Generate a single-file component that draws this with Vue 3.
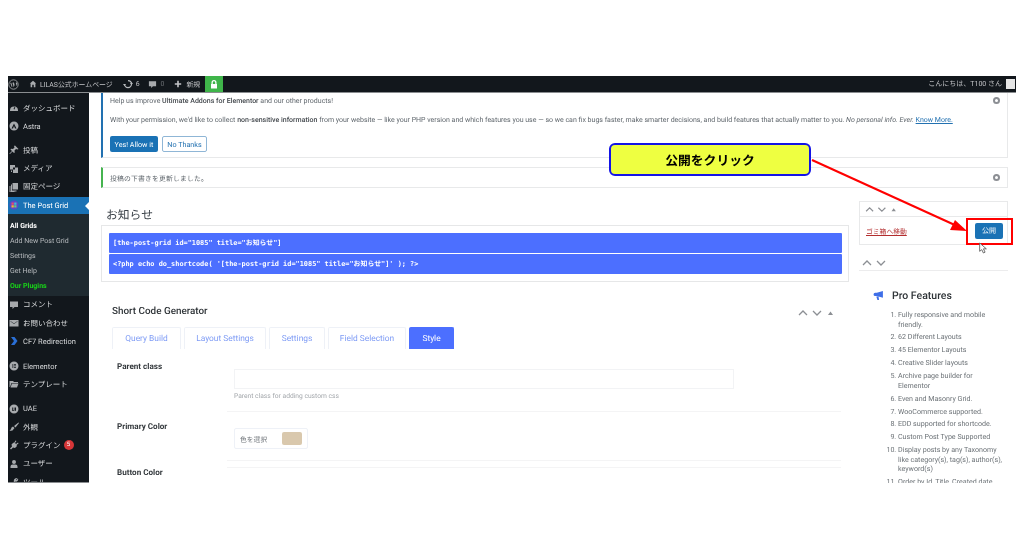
<script setup>
const topItems = [
  { label: 'ダッシュボード', icon: 'dash', cls: 'first' },
  { label: 'Astra', icon: 'astra' },
  { label: '投稿', icon: 'pin', cls: 'gap' },
  { label: 'メディア', icon: 'media' },
  { label: '固定ページ', icon: 'page' },
]
const subItems = ['Add New Post Grid', 'Settings', 'Get Help']
const lowItems = [
  { label: 'コメント', icon: 'comment' },
  { label: 'お問い合わせ', icon: 'mail' },
  { label: 'CF7 Redirection', icon: 'cf7' },
  { label: 'Elementor', icon: 'el', cls: 'gap2' },
  { label: 'テンプレート', icon: 'folder' },
  { label: 'UAE', icon: 'uae', cls: 'gap2' },
  { label: '外観', icon: 'brush' },
  { label: 'プラグイン', icon: 'plug', badge: '5' },
  { label: 'ユーザー', icon: 'user' },
  { label: 'ツール', icon: 'tool' },
]
const paths = {
  dash: 'M2 15a8 8 0 1 1 16 0v1H2zM9 12l3-6 1 1-2 6z',
  astra: 'M10 1a9 9 0 1 0 0 18a9 9 0 0 0 0-18zM10 5l5 10h-3l-2-5-2 5H5z',
  pin: 'M12 1l7 7-2 1-3-1-3 3 .5 4-1.5 1-3-3-5 5-1 0 0-1 5-5-3-3 1-1.5 4 .5 3-3-1-3z',
  media: 'M2 2h10v9H2zM8 7h10v11H8zM4 13h2v3h-2z',
  page: 'M7 2h11v13H7zM4 5h2v12h9v2H4zM1 8h2v11h8v1H1z',
  comment: 'M2 3h16v11h-7l-4 4v-4H2z',
  mail: 'M1 4h18v13H1zM3 6l7 5 7-5v1l-7 5-7-5z',
  cf7: 'M4 2l7 0 6 8-6 8-7 0 6-8z',
  el: 'M10 1a9 9 0 1 0 0 18a9 9 0 0 0 0-18zM7 6h1.500v8H7zM10 6h4v1.500h-4zM10 9.200h4v1.500h-4zM10 12.500h4V14h-4z',
  folder: 'M1 4h7l2 2h8v2H5l-3 8H1zM6 9h13l-3 8H3z',
  uae: 'M10 1a9 9 0 1 0 0 18a9 9 0 0 0 0-18zM6 7h1.500v5h2V7H11v6.500H6zM12 7h2v6.500h-2z',
  brush: 'M19 1l-9 7 3 3 7-9zM8 9l3 3-4 5-6 1 3-4 1-3z',
  plug: 'M13 1l2 1-3 4 2 2 4-3 1 2-4 3 1 2-4 4-4-1-4 4-2-2 4-4-1-4 4-4 1 1z',
  user: 'M10 2a4 4 0 1 1 0 8a4 4 0 0 1 0-8zM3 18v-3q0-4 4-4h6q4 0 4 4v3z',
  tool: 'M17 2l-3 3 1 1 3-3q1 3-1 5t-5 1l-7 8q-2 1-3-1l8-7q-1-3 1-5t5-2z',
}
const features = [
  'Fully responsive and mobile\nfriendly.',
  '62 Different Layouts',
  '45 Elementor Layouts',
  'Creative Slider layouts',
  'Archive page builder for\nElementor',
  'Even and Masonry Grid.',
  'WooCommerce supported.',
  'EDD supported for shortcode.',
  'Custom Post Type Supported',
  'Display posts by any Taxonomy\nlike category(s), tag(s), author(s),\nkeyword(s)',
  'Order by Id, Title, Created date',
]
const tabs = [
  { label: 'Query Build', w: 69 },
  { label: 'Layout Settings', w: 82 },
  { label: 'Settings', w: 56 },
  { label: 'Field Selection', w: 78 },
  { label: 'Style', w: 45, active: true },
]
</script>

<template>
  <div class="frame">
    <header class="adminbar">
      <svg class="wp" viewBox="0 0 20 20"><circle cx="10" cy="10" r="8.500" fill="none" stroke="#a7aaad" stroke-width="1.500"/><path d="M4 6h5v1H8l2.500 8 1.500-4-1-4h-1V6h5v1h-1l2 6 1-3q.5-2-1-3V6" fill="#a7aaad"/><path d="M4 7l3 8 1-2-2-6z" fill="#a7aaad"/></svg>
      <svg class="ab-ic home" viewBox="0 0 20 20"><path d="M10 2l8 7h-2v9h-4v-6H8v6H4V9H2z" fill="#a7aaad"/></svg>
      <span class="ab-text site">LILAS公式ホームページ</span>
      <svg class="ab-ic upd" viewBox="0 0 20 20"><path d="M10 3a7 7 0 1 1-7 7" fill="none" stroke="#b9bcbf" stroke-width="2.500"/><path d="M0 10h6l-3 4zM14 10h6l-3-4z" fill="#b9bcbf"/></svg>
      <span class="ab-text num">6</span>
      <svg class="ab-ic cm" viewBox="0 0 20 20"><path d="M2 3h16v11h-7l-4 4v-4H2z" fill="#a7aaad"/></svg>
      <span class="ab-text num0 dim">0</span>
      <svg class="ab-ic plus" viewBox="0 0 20 20"><path d="M8 2h4v6h6v4h-6v6H8v-6H2V8h6z" fill="#c3c4c7"/></svg>
      <span class="ab-text new">新規</span>
      <span class="lock">
        <svg viewBox="0 0 20 20"><path d="M5 9V6a5 5 0 0 1 10 0v3h1v9H4V9zM7.500 9h5V6a2.500 2.500 0 0 0-5 0z" fill="#fff"/></svg>
      </span>
      <span class="greeting">こんにちは、T100 さん</span>
      <span class="avatar"></span>
    </header>

    <div class="body">
      <aside class="side">
        <div v-for="it in topItems" :key="it.label" class="item" :class="it.cls">
          <svg class="mi" viewBox="0 0 20 20"><path :d="paths[it.icon]" fill="#a7aaad" fill-rule="evenodd"/></svg>
          <span>{{ it.label }}</span>
        </div>
        <div class="item current">
          <svg class="mi" viewBox="0 0 20 20">
            <circle cx="10" cy="10" r="9" fill="#5a48c8"/>
            <rect x="5" y="5" width="4.500" height="4.500" fill="#e84a6f"/>
            <rect x="10.500" y="5" width="4.500" height="4.500" fill="#3ec1d3"/>
            <rect x="5" y="10.500" width="4.500" height="4.500" fill="#f5b82e"/>
            <rect x="10.500" y="10.500" width="4.500" height="4.500" fill="#5fcf80"/>
          </svg>
          <span>The Post Grid</span>
          <i class="notch"></i>
        </div>
        <div class="sub">
          <div class="sub-item strong">All Grids</div>
          <div v-for="s in subItems" :key="s" class="sub-item">{{ s }}</div>
          <div class="sub-item plugins">Our Plugins</div>
        </div>
        <div v-for="it in lowItems" :key="it.label" class="item" :class="it.cls">
          <svg class="mi" viewBox="0 0 20 20"><path :d="paths[it.icon]" :fill="it.icon === 'cf7' ? '#2a6fd6' : '#a7aaad'" fill-rule="evenodd"/></svg>
          <span>{{ it.label }}</span>
          <b v-if="it.badge" class="badge">{{ it.badge }}</b>
        </div>
      </aside>

      <main class="main">
        <section class="notice blue">
          <p class="n1">Help us improve <b>Ultimate Addons for Elementor</b> and our other products!</p>
          <p class="n2">With your permission, we'd like to collect <b>non-sensitive information</b> from your website — like your PHP version and which features you use — so we can fix bugs faster, make smarter decisions, and build features that actually matter to you. <em>No personal info. Ever.</em> <a>Know More.</a></p>
          <div class="n-btns">
            <span class="btn solid">Yes! Allow it</span>
            <span class="btn ghost">No Thanks</span>
          </div>
          <span class="close top"></span>
        </section>
        <section class="notice green">
          <span>投稿の下書きを更新しました。</span>
          <span class="close mid"></span>
        </section>

        <div class="cols">
          <div class="left">
            <h1>お知らせ</h1>
            <div class="codes">
              <code>[the-post-grid id="1085" title="お知らせ"]</code>
              <code>&lt;?php echo do_shortcode( '[the-post-grid id="1085" title="お知らせ"]' ); ?&gt;</code>
            </div>
            <div class="gen">
              <div class="gen-head">
                <h2>Short Code Generator</h2>
                <span class="chev">
                  <svg viewBox="0 0 36 8"><path d="M1 6l4-4 4 4M15 2l4 4 4-4" fill="none" stroke="#8c8f94" stroke-width="1.300"/><path d="M30 6l2.500-3.500L35 6z" fill="#8c8f94"/></svg>
                </span>
              </div>
              <div class="tabs">
                <span v-for="t in tabs" :key="t.label" class="tab" :class="{ active: t.active }" :style="{ width: t.w + 'px' }">{{ t.label }}</span>
              </div>
              <div class="field f1">
                <label>Parent class</label>
                <div class="ctl">
                  <div class="input"></div>
                  <div class="help">Parent class for adding custom css</div>
                </div>
              </div>
              <div class="field f2">
                <label>Primary Color</label>
                <div class="ctl">
                  <div class="color"><span>色を選択</span><i></i></div>
                </div>
              </div>
              <div class="field f3">
                <label>Button Color</label>
                <div class="ctl"></div>
              </div>
            </div>
          </div>

          <div class="right">
            <div class="pub">
              <div class="pub-head">
                <svg viewBox="0 0 36 8"><path d="M1 6l4-4 4 4M15 2l4 4 4-4" fill="none" stroke="#8c8f94" stroke-width="1.300"/><path d="M30 6l2.500-3.500L35 6z" fill="#8c8f94"/></svg>
              </div>
              <div class="pub-row">
                <a class="trash">ゴミ箱へ移動</a>
                <span class="publish">公開</span>
              </div>
            </div>
            <div class="box-head">
              <svg viewBox="0 0 24 8"><path d="M1 6l4-4 4 4M15 2l4 4 4-4" fill="none" stroke="#8c8f94" stroke-width="1.300"/></svg>
            </div>
            <div class="pro">
              <div class="pro-title">
                <svg viewBox="0 0 20 20"><path d="M18 2v12L7 11H4a3 3 0 0 1 0-6h3zM6 12h4l1 6H8z" fill="#3f6fe8"/></svg>
                <span>Pro Features</span>
              </div>
              <ol>
                <li v-for="f in features" :key="f">{{ f }}</li>
              </ol>
            </div>
          </div>
        </div>
      </main>
    </div>

    <div class="callout">公開をクリック</div>
    <svg class="arrow" viewBox="0 0 170 90">
      <path d="M1 1L146 67" stroke="#f00" stroke-width="2" fill="none"/>
      <path d="M156 72l-17-1 5-10z" fill="#f00"/>
    </svg>
    <div class="redbox"></div>
    <svg class="cursor" viewBox="0 0 12 14"><path d="M2 1v10l2.500-2 2 4 2-1-2-4H10z" fill="#fff" stroke="#555" stroke-width="1"/></svg>
  </div>
</template>

<style>
html, body { margin: 0; background: #fff; }
</style>

<style scoped>
.frame {
  position: relative;
  margin: 76px 8px 0;
  height: 407px;
  width: 1008px;
  overflow: visible;
  font-family: Roboto, "Noto Sans CJK JP", sans-serif;
  text-rendering: geometricPrecision;
  color: #50575e;
  filter: blur(0.35px);
}
.adminbar {
  height: 17px;
  background: #12171c;
  display: flex;
  align-items: center;
  color: #c3c4c7;
  font-size: 6.900px;
  border-bottom: 1px solid #8a8d90;
  box-sizing: border-box;
}
.wp { width: 11px; height: 11px; margin-left: 0; flex: none; }
.ab-ic { width: 8px; height: 8px; flex: none; }
.home { margin-left: 10px; width: 8px; height: 8px; }
.site { margin-left: 3px; }
.upd { margin-left: 10px; width: 10px; height: 10px; }
.num { margin-left: 3px; }
.num0 { margin-left: 4px; }
.dim { color: #6d7175; }
.cm { margin-left: 8px; width: 9px; height: 9px; }
.plus { margin-left: 10px; width: 8px; height: 8px; }
.new { margin-left: 4px; }
.lock { width: 18px; height: 16px; margin-left: 5px; background: #3fb54a; display: flex; align-items: center; justify-content: center; }
.lock svg { width: 10px; height: 11px; }
.greeting { margin-left: auto; margin-right: 4px; font-size: 7px; }
.avatar { width: 9px; height: 10px; background: #e6e6e6; margin-right: 1px; }

.body { display: flex; height: 390px; overflow: hidden; }
.side {
  width: 81px;
  flex: none;
  background: #12171c;
  color: #d5d7d9;
  font-size: 7.500px;
  overflow: hidden;
  border-bottom: 1px solid #8a8d90;
  box-sizing: border-box;
  padding-top: 6px;
}
.item {
  height: 18.300px;
  display: flex;
  align-items: center;
  padding-left: 1px;
  position: relative;
  white-space: nowrap;
}
.item .mi { width: 10px; height: 10px; flex: none; margin-right: 4px; }
.item.gap { margin-top: 5.500px; }
.item.gap2 { margin-top: 6.300px; }
.current { background: #1a72b5; color: #fff; height: 17px; margin-top: 0.700px; }
.notch { position: absolute; right: 0; top: 5px; border: 4px solid transparent; border-right-color: #fff; border-left: 0; }
.sub { background: #1f2a30; height: 82px; padding-top: 5px; box-sizing: border-box; }
.sub-item { height: 15.200px; line-height: 15.200px; font-size: 7px; color: #b6babd; padding-left: 2px; }
.strong { color: #fff; font-weight: 700; }
.plugins { color: #19d219; font-weight: 700; }
.badge { margin-left: 3px; width: 10px; height: 10px; border-radius: 50%; background: #d63638; color: #fff; font-size: 6px; line-height: 10px; text-align: center; font-weight: 400; }

.main { flex: 1; min-width: 0; padding-left: 12px; background: #fff; overflow: hidden; }
.notice { position: relative; box-sizing: border-box; width: 907px; background: #fff; border: 1px solid #e8e9ea; font-size: 7px; color: #5f666c; }
.notice.blue { height: 65px; border-top: 0; border-left: 2.500px solid #2271b1; padding: 3px 0 0 7px; }
.notice p { margin: 0; line-height: 10px; white-space: nowrap; }
.n2 { margin-top: 9px !important; }
.notice b { color: #44494e; font-weight: 500; }
.notice a { color: #2271b1; text-decoration: underline; }
.n-btns { display: flex; gap: 4px; margin-top: 11px; }
.btn { height: 16px; box-sizing: border-box; display: flex; align-items: center; justify-content: center; border-radius: 2px; font-size: 7.200px; }
.solid { width: 48px; background: #1a72b5; color: #fff; }
.ghost { width: 45px; border: 1px solid #8fb6d6; color: #2271b1; }
.notice.green { margin-top: 9px; height: 21px; border-left: 2.500px solid #46b450; padding-left: 7px; display: flex; align-items: center; font-size: 6.800px; letter-spacing: .2px; }
.close { position: absolute; right: 7px; width: 7px; height: 7px; border: 2px solid #8c8f94; border-radius: 50%; box-sizing: border-box; }
.close.top { top: 4px; }
.close.mid { top: 6px; }

.cols { display: flex; gap: 10px; width: 907px; }
.left { width: 748px; flex: none; }
.right { width: 149px; flex: none; padding-top: 13px; }
h1 { margin: 17px 0 0 5px; font-size: 11.800px; line-height: 20px; font-weight: 400; color: #3c434a; }
.codes { margin-top: 0; height: 57px; box-sizing: border-box; border: 1px solid #e6e7e8; padding: 7px 6px 0 7px; display: flex; flex-direction: column; gap: 1px; }
code { height: 20px; background: #4c6fff; color: #fff; border-radius: 1px; font-family: "DejaVu Sans Mono", "Noto Sans CJK JP", monospace; font-weight: 700; font-size: 6.900px; line-height: 20px; padding-left: 4px; white-space: nowrap; }

.gen { padding: 0 8px 0 11px; }
.gen-head { display: flex; align-items: center; justify-content: space-between; margin-top: 21px; height: 16px; }
h2 { margin: 0; font-size: 9.900px; font-weight: 500; color: #2f3438; }
.chev svg, .pub-head svg, .box-head svg { display: block; }
.chev { margin-right: 7px; }
.chev svg { width: 36px; height: 8px; margin-top: 4px; }
.tabs { display: flex; gap: 3px; margin-top: 8px; }
.tab { height: 22px; box-sizing: border-box; display: flex; align-items: center; justify-content: center; border: 1px solid #eef1f7; border-bottom: 0; border-radius: 2px 2px 0 0; color: #7f9cf5; font-size: 8.400px; }
.tab.active { background: #4c6fff; border-color: #4c6fff; color: #fff; }
.field { display: flex; font-size: 8.100px; box-sizing: border-box; }
.field label { width: 115px; flex: none; padding-left: 5px; box-sizing: border-box; color: #33383c; font-weight: 700; line-height: 10px; }
.ctl { flex: 1; min-width: 0; padding-left: 7px; border-bottom: 1px solid #f4f4f5; box-sizing: border-box; }
.f1 { height: 63px; }
.f1 label { padding-top: 12px; }
.f1 .ctl { padding-top: 20px; }
.f2 { height: 49px; }
.f2 label { padding-top: 9px; }
.f2 .ctl { padding-top: 16px; }
.f3 { margin-top: 6px; }
.f3 label { padding-top: 0; }
.f3 .ctl { border-bottom: 0; border-top: 1px solid #f4f4f5; height: 20px; }
.input { height: 20px; border: 1px solid #f2f3f5; box-sizing: border-box; width: 500px; }
.help { margin-top: 2px; font-size: 6.700px; color: #a3a7ab; line-height: 10px; }
.color { width: 74px; height: 21px; box-sizing: border-box; border: 1px solid #eef1f7; border-radius: 2px; display: flex; align-items: center; padding-left: 5px; font-size: 6.800px; color: #72777c; }
.color i { width: 20px; height: 13px; margin-left: auto; margin-right: 5px; background: #d9c8ad; border-radius: 2px; }

.pub { height: 44px; box-sizing: border-box; border: 1px solid #e8e9ea; }
.pub-head { height: 15px; border-bottom: 1px solid #e8e9ea; padding: 4px 0 0 3px; box-sizing: border-box; }
.pub-head svg { width: 36px; height: 7px; }
.pub-row { display: flex; align-items: center; justify-content: space-between; padding: 6px 4px 0 6px; }
.trash { color: #b32d2e; font-size: 6.800px; text-decoration: underline; }
.publish { width: 28px; height: 16px; background: #1a72b5; color: #fff; font-size: 7px; border-radius: 2px; display: flex; align-items: center; justify-content: center; }
.box-head { margin-top: 14px; height: 11px; border-bottom: 1px solid #ececed; padding-left: 3px; }
.box-head svg { width: 24px; height: 8px; }
.pro { padding: 18px 0 0 14px; }
.pro-title { display: flex; align-items: center; gap: 8px; height: 12px; font-size: 10.500px; font-weight: 500; color: #2f3438; }
.pro-title svg { width: 11px; height: 11px; }
ol { margin: 9px 0 0; padding: 0 0 0 25px; font-size: 7.100px; line-height: 9.600px; color: #6b7176; }
li { margin-bottom: 3.300px; white-space: pre-line; }

.callout {
  position: absolute; left: 601px; top: 67px; width: 202px; height: 33px;
  box-sizing: border-box; background: #eeff41; border: 2px solid #1414e6; border-radius: 6px;
  display: flex; align-items: center; justify-content: center;
  color: #000; font-weight: 700; font-size: 12.800px; font-family: "Noto Sans CJK JP", sans-serif;
}
.arrow { position: absolute; left: 803px; top: 83px; width: 170px; height: 90px; overflow: visible; }
.redbox { position: absolute; left: 958px; top: 142px; width: 47px; height: 27px; box-sizing: border-box; border: 2px solid #f00; }
.cursor { position: absolute; left: 970px; top: 166px; width: 10px; height: 12px; }
</style>
